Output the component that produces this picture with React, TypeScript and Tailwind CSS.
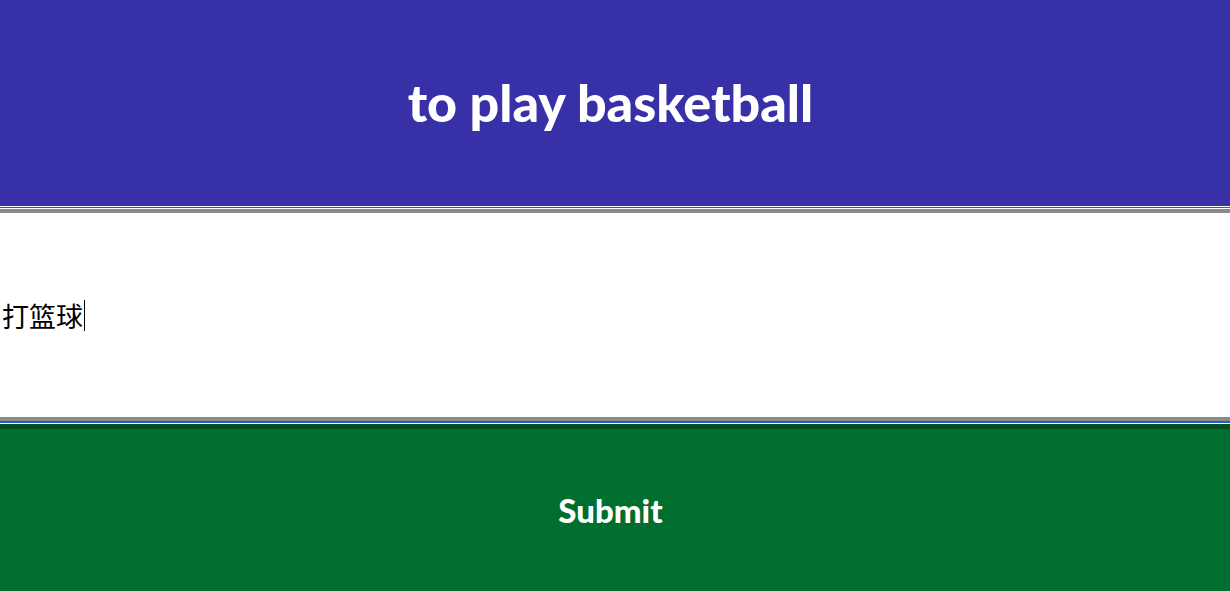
import { useState } from "react";

export default function App() {
  const [value] = useState("打篮球");

  return (
    <div className="flex flex-col w-full bg-white" style={{ fontFamily: "Lato, 'Noto Sans', sans-serif" }}>
      {/* Prompt */}
      <header className="h-[206px] bg-[#3730a6] flex items-center justify-center pr-[9px]">
        <h1 className="text-white text-[52px] font-black leading-none pb-[2px]">
          to play basketball
        </h1>
      </header>

      {/* Answer box with focus ring */}
      <div className="h-px bg-white" />
      <div className="h-px bg-[#1b5fd4]" />
      <div className="h-px bg-white" />
      <div className="h-[212px] border-y-4 border-[#8a8a8a] bg-white flex items-center">
        <span
          className="text-black text-[27px] leading-none pl-[2px]"
          style={{ fontFamily: "'Noto Sans CJK SC', 'Noto Sans', sans-serif" }}
        >
          {value}
        </span>
        <span className="w-px h-[31px] bg-black ml-px" />
      </div>
      <div className="h-[2px] bg-[#1b5fd4]" />
      <div className="h-px bg-white" />

      {/* Submit */}
      <button className="h-[174px] w-full bg-[#006e2e] border-t-[5px] border-[#034d1f] flex items-center justify-center pb-[5px] pr-[9px]">
        <span className="text-white text-[33px] font-black">Submit</span>
      </button>
    </div>
  );
}
